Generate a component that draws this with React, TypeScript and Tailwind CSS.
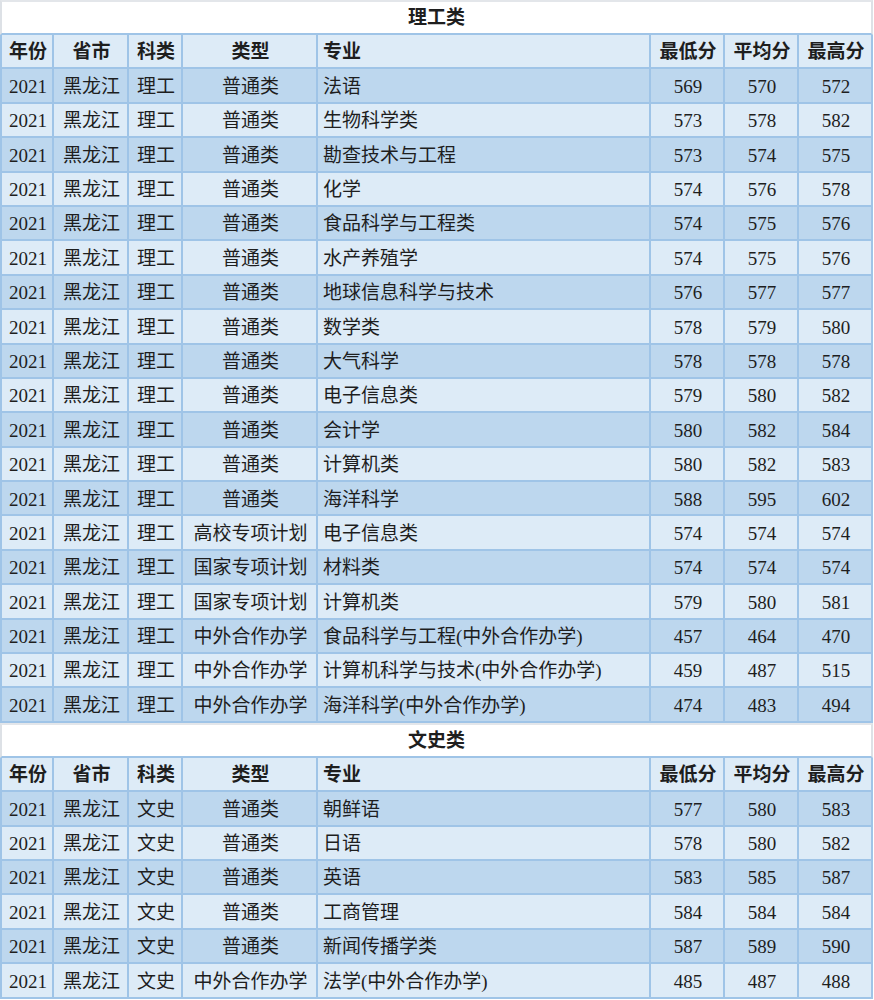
import React from "react";

type Row = [string, string, string, string, string, string, string, string];

const headers = ["年份", "省市", "科类", "类型", "专业", "最低分", "平均分", "最高分"];

const lgRows: Row[] = [
	["2021", "黑龙江", "理工", "普通类", "法语", "569", "570", "572"],
	["2021", "黑龙江", "理工", "普通类", "生物科学类", "573", "578", "582"],
	["2021", "黑龙江", "理工", "普通类", "勘查技术与工程", "573", "574", "575"],
	["2021", "黑龙江", "理工", "普通类", "化学", "574", "576", "578"],
	["2021", "黑龙江", "理工", "普通类", "食品科学与工程类", "574", "575", "576"],
	["2021", "黑龙江", "理工", "普通类", "水产养殖学", "574", "575", "576"],
	["2021", "黑龙江", "理工", "普通类", "地球信息科学与技术", "576", "577", "577"],
	["2021", "黑龙江", "理工", "普通类", "数学类", "578", "579", "580"],
	["2021", "黑龙江", "理工", "普通类", "大气科学", "578", "578", "578"],
	["2021", "黑龙江", "理工", "普通类", "电子信息类", "579", "580", "582"],
	["2021", "黑龙江", "理工", "普通类", "会计学", "580", "582", "584"],
	["2021", "黑龙江", "理工", "普通类", "计算机类", "580", "582", "583"],
	["2021", "黑龙江", "理工", "普通类", "海洋科学", "588", "595", "602"],
	["2021", "黑龙江", "理工", "高校专项计划", "电子信息类", "574", "574", "574"],
	["2021", "黑龙江", "理工", "国家专项计划", "材料类", "574", "574", "574"],
	["2021", "黑龙江", "理工", "国家专项计划", "计算机类", "579", "580", "581"],
	["2021", "黑龙江", "理工", "中外合作办学", "食品科学与工程(中外合作办学)", "457", "464", "470"],
	["2021", "黑龙江", "理工", "中外合作办学", "计算机科学与技术(中外合作办学)", "459", "487", "515"],
	["2021", "黑龙江", "理工", "中外合作办学", "海洋科学(中外合作办学)", "474", "483", "494"],
];

const wsRows: Row[] = [
	["2021", "黑龙江", "文史", "普通类", "朝鲜语", "577", "580", "583"],
	["2021", "黑龙江", "文史", "普通类", "日语", "578", "580", "582"],
	["2021", "黑龙江", "文史", "普通类", "英语", "583", "585", "587"],
	["2021", "黑龙江", "文史", "普通类", "工商管理", "584", "584", "584"],
	["2021", "黑龙江", "文史", "普通类", "新闻传播学类", "587", "589", "590"],
	["2021", "黑龙江", "文史", "中外合作办学", "法学(中外合作办学)", "485", "487", "488"],
];

const gridCols = "grid grid-cols-[54px_75px_54px_135px_333px_74px_74px_74px]";
const font = { fontFamily: '"Liberation Serif", "Noto Sans CJK SC", serif' };

const Cell: React.FC<{ text: string; idx: number; bold?: boolean }> = ({ text, idx, bold }) => (
	<div
		className={`flex items-center pt-[3px] border-r-2 border-b-2 border-[#9fc4e7] whitespace-nowrap ${
			idx === 0 ? "border-l-2" : ""
		} ${idx === 4 ? "justify-start pl-[5px]" : "justify-center pl-[2px]"} ${bold ? "font-bold" : ""}`}
	>
		{text}
	</div>
);

const Section: React.FC<{ title: string; rows: Row[] }> = ({ title, rows }) => (
	<div>
		<div className="h-[35px] pt-[2px] flex items-center justify-center border-t-2 border-l-2 border-r-2 border-t-[#e3e6ea] border-l-[#dde1e6] border-r-[#dde1e6] border-b-2 border-b-[#9fc4e7] bg-white font-bold text-[19px]">
			{title}
		</div>
		<div className={`${gridCols} h-[34.4px] bg-[#ddebf7] text-[19px]`}>
			{headers.map((h, i) => (
				<Cell key={i} text={h} idx={i} bold />
			))}
		</div>
		{rows.map((r, ri) => (
			<div
				key={ri}
				className={`${gridCols} h-[34.4px] text-[19px] ${ri % 2 === 0 ? "bg-[#bdd7ee]" : "bg-[#ddebf7]"}`}
			>
				{r.map((c, i) => (
					<Cell key={i} text={c} idx={i} />
				))}
			</div>
		))}
	</div>
);

export default function App() {
	return (
		<div className="w-[874px] bg-white text-[#1e1e1e]" style={font}>
			<div className="w-[873px]">
				<Section title="理工类" rows={lgRows} />
				<Section title="文史类" rows={wsRows} />
			</div>
		</div>
	);
}
